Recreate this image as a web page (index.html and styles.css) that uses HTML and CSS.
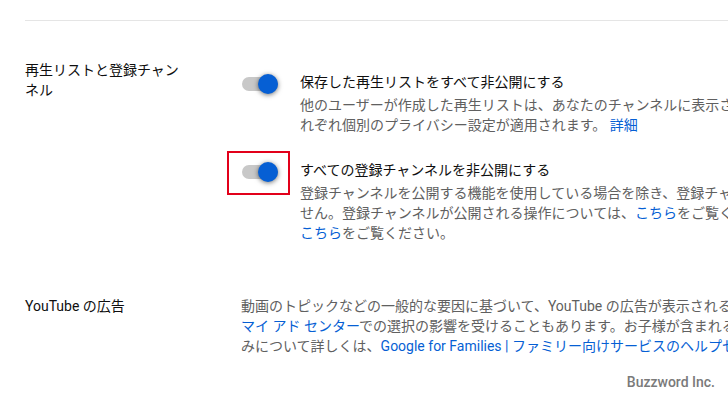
FILE: index.html
```html
<!DOCTYPE html>
<html lang="ja">
<head>
  <meta charset="UTF-8" />
  <meta name="viewport" content="width=device-width, initial-scale=1.0" />
  <title>プライバシー設定</title>
  <link rel="stylesheet" href="styles.css">
</head>
<body>
  <main class="settings">
    <section class="section">
      <div class="label">再生リストと登録チャンネル</div>
      <div class="content toggles">
        <div class="toggle-row">
          <div class="toggle"><span class="track"></span><span class="knob"></span></div>
          <div class="toggle-text">
            <div class="title">保存した再生リストをすべて非公開にする</div>
            <p class="desc">他のユーザーが作成した再生リストは、あなたのチャンネルに表示されません。ただし、それぞれ個別のプライバシー設定が適用されます。 <a href="#">詳細</a></p>
          </div>
        </div>
        <div class="toggle-row">
          <div class="toggle marked"><span class="track"></span><span class="knob"></span></div>
          <div class="toggle-text">
            <div class="title">すべての登録チャンネルを非公開にする</div>
            <p class="desc">登録チャンネルを公開する機能を使用している場合を除き、登録チャンネルは、公開されません。登録チャンネルが公開される操作については、<a href="#">こちら</a>をご覧ください。設定の詳細は<a href="#">こちら</a>をご覧ください。</p>
          </div>
        </div>
      </div>
    </section>

    <section class="section ads">
      <div class="label">YouTube の広告</div>
      <div class="content">
        <p class="desc">動画のトピックなどの一般的な要因に基づいて、YouTube の広告が表示されることがあります。<a href="#" class="nowrap">マイ アド センター</a>での選択の影響を受けることもあります。お子様が含まれるファミリーでの広告の仕組みについて詳しくは、<a href="#">Google for Families | ファミリー向けサービスのヘルプセンター</a> をご覧ください。</p>
      </div>
    </section>
  </main>

  <div class="watermark">Buzzword Inc.</div>
</body>
</html>
```

FILE: styles.css
```css
html, body {
  overflow: hidden;
}

body {
  margin: 0;
  height: 400px;
  position: relative;
  font-family: Roboto, 'Noto Sans CJK JP', sans-serif;
  font-size: 14px;
  line-height: 20px;
  color: #0f0f0f;
  background-color: #fff;
}

.settings {
  margin: 20px 0 0 25px;
  border-top: 1px solid #e5e5e5;
  width: 900px;
}

.section {
  display: flex;
  padding-top: 39px;
}

.section.ads {
  padding-top: 53px;
}

.label {
  width: 160px;
  margin-right: 56px;
  flex-shrink: 0;
}

.content {
  width: 640px;
  flex-shrink: 0;
}

.ads .content {
  width: 675px;
}

.toggles {
  padding-top: 12px;
  display: flex;
  flex-direction: column;
  gap: 25px;
}

.toggle-row {
  display: flex;
  align-items: flex-start;
}

.toggle {
  position: relative;
  width: 36px;
  height: 20px;
  margin: 2px 22px 0 1px;
  flex-shrink: 0;
}

.track {
  position: absolute;
  left: 0;
  right: 0;
  top: 3px;
  height: 14px;
  border-radius: 7px;
  background-color: #c8c8c8;
}

.knob {
  position: absolute;
  right: 0;
  top: 0;
  width: 20px;
  height: 20px;
  border-radius: 50%;
  background-color: #065fd4;
  box-shadow: 0 1px 5px rgba(0,0,0,0.55);
}

.toggle.marked::after {
  content: "";
  position: absolute;
  left: -15px;
  right: -12px;
  top: -11px;
  bottom: -13px;
  border: 2px solid #e2001a;
}

.toggle-text {
  flex: 1;
}

.desc {
  margin: 3px 0 0 0;
  color: #606060;
}

.ads .desc {
  margin: 0;
}

.desc a {
  color: #065fd4;
  text-decoration: none;
}

.nowrap {
  white-space: nowrap;
}

.watermark {
  position: absolute;
  right: 13px;
  bottom: 8px;
  font-weight: 500;
  color: #7a7a7a;
}
```
